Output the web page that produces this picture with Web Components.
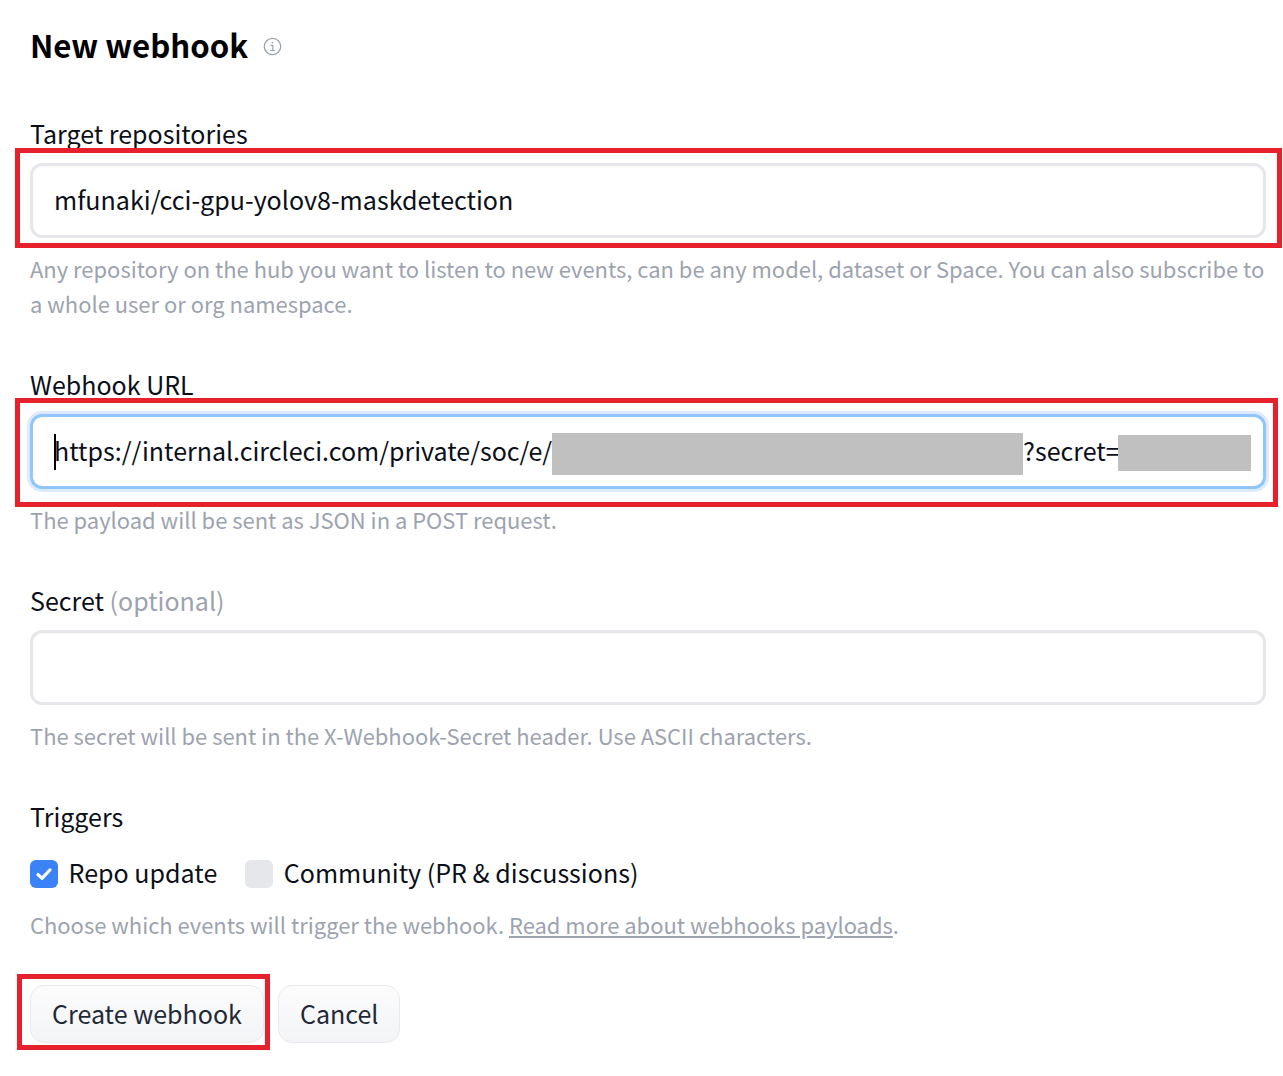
<!DOCTYPE html>
<html lang="en"><head><meta charset="utf-8"><title>New webhook</title>
<style>
html,body{margin:0;background:#fff}
body{font-family:"Noto Sans CJK JP","Noto Sans",sans-serif;font-size:25px;line-height:35px;color:#0b0f19}
</style></head><body>
<template id="t-form"><style>
:host{display:flex;flex-direction:column;box-sizing:border-box;width:1283px;height:1076px;padding:25px 17px 0 30px;overflow:hidden}
::slotted(h1){margin:0 0 51px;font-size:31.2px;line-height:40px;font-weight:700;color:#000;display:flex;align-items:center;gap:15px}
</style><slot></slot></template>
<template id="t-field"><style>
:host{display:block;margin-bottom:46px}
.l{display:block;margin-bottom:12px;color:#0b0f19}
.h{display:block;margin-top:13px;color:#9ca3af;font-size:21.95px}
</style><span class="l"><slot name="label"></slot></span><slot></slot><span class="h"><slot name="hint"></slot></span></template>
<template id="t-input"><style>
:host{display:flex;align-items:center;box-sizing:border-box;height:75px;padding:0 12px 2px 21px;border:3px solid #e5e7eb;border-radius:12px;background:#fff;white-space:nowrap;font-size:25.05px;color:#0b0f19;box-shadow:inset 0 1px 2px rgba(0,0,0,.03)}
:host([focused]){border-color:#93c5fd;box-shadow:0 0 0 3px #dbeafe;font-size:25px}
</style><slot></slot></template>
<template id="t-redact"><style>
:host{display:inline-block;background:#c0c0c0;flex:none}
</style></template>
<template id="t-caret"><style>
:host{display:block;flex:none;width:2px;height:36px;margin:2px -2px 0 0;background:#000}
</style></template>
<template id="t-mark"><style>
:host{display:block;position:relative}
.b{position:absolute;box-sizing:border-box;border:5px solid #e7212b;pointer-events:none;top:var(--t);right:var(--r);bottom:var(--b);left:var(--l)}
</style><slot></slot><div class="b"></div></template>
<template id="t-check"><style>
:host{display:inline-flex;align-items:center;gap:10.5px;font-size:25.05px}
.c{box-sizing:border-box;width:28px;height:28px;border-radius:6px;background:#e5e7eb;display:flex;align-items:center;justify-content:center}
:host([checked]) .c{background:#3b82f6}
svg{display:none;width:20px;height:20px}
:host([checked]) svg{display:block}
.t{margin-top:-3px}
</style><span class="c"><svg viewBox="0 0 20 20"><path d="M4 10.5l4 3.8 8-8.4" fill="none" stroke="#fff" stroke-width="3.2" stroke-linecap="round" stroke-linejoin="round"/></svg></span><span class="t"><slot></slot></span></template>
<template id="t-button"><style>
:host{display:inline-flex;align-items:center;box-sizing:border-box;height:58px;padding:0 21px 1px;border:1.5px solid #e8eaee;border-radius:14px;background:linear-gradient(#fcfcfd,#f3f4f6);color:#1f2937;font-size:25.05px;white-space:nowrap}
</style><slot></slot></template>
<template id="t-info"><style>
:host{display:inline-flex;flex:none;margin-top:3px}
svg{width:19px;height:19px;display:block}
</style><svg viewBox="0 0 19 19" fill="none" stroke="#9ca3af"><circle cx="9.5" cy="9.5" r="8.2" stroke-width="1.3"/><circle cx="9.5" cy="5.6" r=".9" fill="#9ca3af" stroke="none"/><path d="M7.6 8.3h2.2v5M7.2 13.5h4.9" stroke-width="1.2"/></svg></template>
<template id="t-row"><style>
:host{display:flex;align-items:center;gap:var(--gap)}
</style><slot></slot></template>

<wh-form>
<h1>New webhook <wh-info></wh-info></h1>

<wh-field>
<span slot="label">Target repositories</span>
<wh-mark style="--t:-15px;--r:-16px;--b:-10px;--l:-15px"><wh-input>mfunaki/cci-gpu-yolov8-maskdetection</wh-input></wh-mark>
<span slot="hint">Any repository on the hub you want to listen to new events, can be any model, dataset or Space. You can also subscribe to a whole user or org namespace.</span>
</wh-field>

<wh-field>
<span slot="label">Webhook URL</span>
<wh-mark style="--t:-16px;--r:-12px;--b:-18px;--l:-15px"><wh-input focused><wh-caret></wh-caret><span>https://internal.circleci.com/private/soc/e/</span><wh-redact style="width:471px;height:42px;margin-top:6px"></wh-redact><span>?secret=</span><wh-redact style="width:133px;height:36px;margin:4px 0 0 -2px"></wh-redact></wh-input></wh-mark>
<span slot="hint">The payload will be sent as JSON in a POST request.</span>
</wh-field>

<wh-field>
<span slot="label">Secret <span style="color:#9ca3af">(optional)</span></span>
<wh-input></wh-input>
<span slot="hint">The secret will be sent in the X-Webhook-Secret header. Use ASCII characters.</span>
</wh-field>

<wh-triggers>
<span slot="label">Triggers</span>
<wh-check checked>Repo update</wh-check><wh-check>Community (PR &amp; discussions)</wh-check>
<span slot="hint">Choose which events will trigger the webhook. <a href="#" style="color:inherit">Read more about webhooks payloads</a>.</span>
</wh-triggers>

<wh-row style="--gap:14px">
<wh-mark style="--t:-11px;--r:-6px;--b:-7px;--l:-13px"><wh-button>Create webhook</wh-button></wh-mark>
<wh-button>Cancel</wh-button>
</wh-row>
</wh-form>

<script>
function def(name,tpl){customElements.define(name,class extends HTMLElement{constructor(){super();this.attachShadow({mode:"open"}).appendChild(document.getElementById(tpl).content.cloneNode(true))}})}
def("wh-form","t-form");def("wh-field","t-field");def("wh-input","t-input");def("wh-redact","t-redact");def("wh-caret","t-caret");def("wh-mark","t-mark");def("wh-check","t-check");def("wh-button","t-button");def("wh-info","t-info");def("wh-row","t-row");
customElements.define("wh-triggers",class extends HTMLElement{constructor(){super();this.attachShadow({mode:"open"}).innerHTML='<style>:host{display:block;margin-bottom:43px}.l{display:block;margin-bottom:22px}.r{display:flex;align-items:center;gap:28px;height:35px}.h{display:block;margin-top:16px;color:#9ca3af;font-size:21.95px}</style><span class="l"><slot name="label"></slot></span><div class="r"><slot></slot></div><span class="h"><slot name="hint"></slot></span>'}});
</script>
</body></html>
